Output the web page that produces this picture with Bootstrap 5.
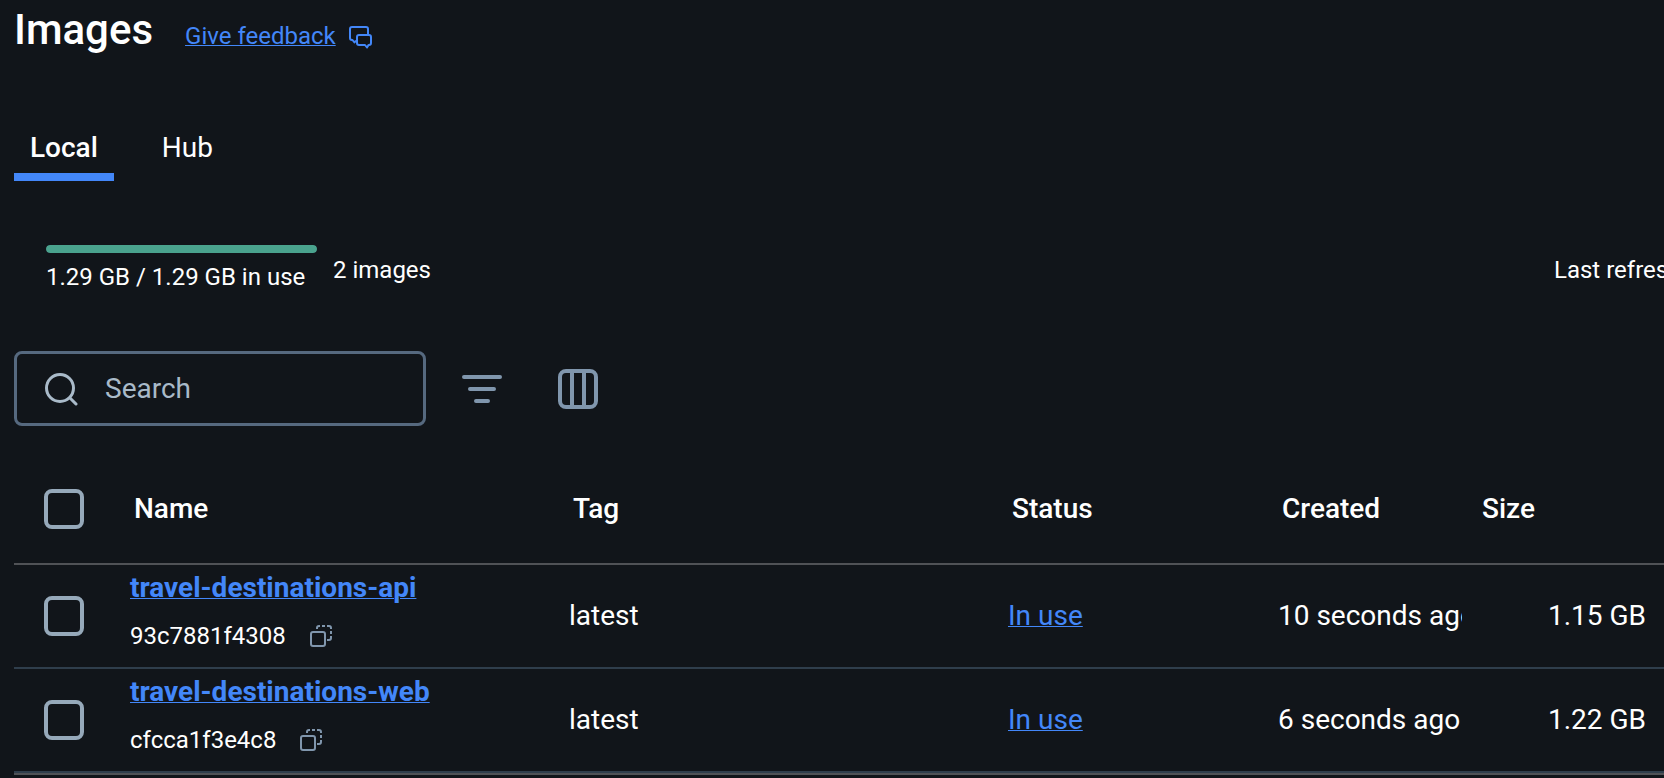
<!DOCTYPE html>
<html lang="en" data-bs-theme="dark">
<head>
<meta charset="utf-8">
<meta name="viewport" content="width=device-width, initial-scale=1">
<title>Images</title>
<link rel="stylesheet" href="https://cdn.jsdelivr.net/npm/bootstrap@5.3.0/dist/css/bootstrap.min.css">
<style>
  body {
    --bs-body-bg: #11151a;
    --bs-body-color: #fff;
    --accent: #4387f9;
    --icon: #8096ad;
    background: #11151a;
    color: #fff;
    font-family: Roboto, "Liberation Sans", sans-serif;
    font-size: 28px;
    line-height: 42px;
    overflow-x: hidden;
  }
  a { color: var(--accent); text-decoration-thickness: 1px; text-underline-offset: 1px; }
  a:hover { color: #7aabff; }
  svg { display: block; flex: none; fill: none; stroke: currentColor; }
  .page { padding-left: 14px; }
  .title { font-size: 42px; line-height: 60px; font-weight: 500; }
  .fs-note { font-size: 24px; line-height: 36px; }
  .feedback { margin-top: 18px; gap: 12px; }
  .feedback svg { margin-top: 2px; }
  .tabs { margin-top: 62px; gap: 32px; }
  .tabs .nav-link { color: #fff; padding: 6px 16px 5px; border-bottom: 8px solid transparent; border-radius: 0; line-height: 40px; }
  .tabs .nav-link.active { font-weight: 500; border-color: var(--accent); }
  .usage { margin-top: 64px; padding-left: 32px; gap: 16px; }
  .usage-meter { width: 271px; }
  .usage .progress { height: 8px; border-radius: 4px; background: #2c3a44; margin-bottom: 6px; }
  .usage .progress-bar { background: #4aa38e; border-radius: 4px; }
  .refreshed { width: 110px; }
  .tools { margin-top: 56px; gap: 36px; }
  .search { width: 412px; height: 75px; border: 3px solid #56697f; border-radius: 8px; padding: 0 24px 0 26px; gap: 26px; color: #a9bac9; }
  .search input, .search input:focus { background: none; border: 0; box-shadow: none; padding: 0; font-size: 28px; line-height: 42px; color: #fff; }
  .search input::placeholder { color: #a9bac9; opacity: 1; }
  .tool-btn { color: var(--icon); padding: 0; border: 0; }
  .tools-icons { gap: 56px; }
  .images-frame { margin-top: 46px; border-bottom: 2px solid #505256; }
  .images { --bs-table-bg: transparent; --bs-table-color: #fff; table-layout: fixed; margin: 0; }
  .images th, .images td { border: 0; border-bottom: 2px solid #2f3e4c; padding: 0 16px; height: 104px; white-space: nowrap; overflow: hidden; vertical-align: middle; }
  .images thead th { border-color: #505256; padding: 0 20px 18px; height: 92px; font-weight: 500; }
  .images tr > .pick { padding-left: 30px; padding-right: 0; }
  .images td.text-end { padding-right: 18px; }
  .images .form-check-input { display: block; width: 40px; height: 40px; margin: 0; border: 4px solid #96a9ba; border-radius: 8px; background-color: transparent; }
  .images .form-check-input:checked { background-color: var(--accent); border-color: var(--accent); }
  .name-cell { gap: 9px; padding-bottom: 11px; }
  .name-cell a { font-weight: 700; }
  .hash { gap: 24px; }
  .c-pick { width: 100px; } .c-status { width: 270px; } .c-created { width: 200px; } .c-size { width: 202px; }
</style>
</head>
<body>
<main class="page">
  <header class="d-flex align-items-start gap-4">
    <h1 class="title m-0 pe-2">Images</h1>
    <div class="feedback fs-note d-flex align-items-center"><a href="#">Give feedback</a>
      <svg width="24" height="24" viewBox="0 0 24 24" stroke-width="2" stroke-linejoin="round" color="#4387f9" aria-hidden="true"><path d="M8 15.500 6.500 17.500 4.500 15H4Q2 15 2 13V4Q2 2 4 2h14Q20 2 20 4v5.500"/><path d="M11 10h10Q23 10 23 12v6q0 2-2 2h-.5l-1.500 2.500-2-2.500h-6q-2 0-2-2v-6q0-2 2-2z"/></svg>
    </div>
  </header>

  <nav class="nav tabs" aria-label="Image source">
    <a class="nav-link active" aria-current="page" href="#">Local</a>
    <a class="nav-link" href="#">Hub</a>
  </nav>

  <section class="usage fs-note d-flex align-items-center">
    <div class="usage-meter">
      <div class="progress" role="progressbar" aria-label="Disk space in use" aria-valuenow="100" aria-valuemin="0" aria-valuemax="100"><div class="progress-bar" style="width: 100%"></div></div>
      <div class="text-nowrap">1.29 GB / 1.29 GB in use</div>
    </div>
    <div>2 images</div>
    <div class="refreshed ms-auto text-nowrap overflow-hidden">Last refresh</div>
  </section>

  <div class="tools d-flex align-items-center">
    <label class="search d-flex align-items-center">
      <svg width="36" height="36" viewBox="0 0 36 36" stroke-width="3" stroke-linecap="round" aria-hidden="true"><circle cx="17" cy="17" r="13.500"/><path d="m27 27 6 6"/></svg>
      <input class="form-control" type="text" placeholder="Search" aria-label="Search">
    </label>
    <div class="tools-icons d-flex">
      <button class="btn tool-btn" type="button" aria-label="Filter"><svg width="40" height="40" viewBox="0 0 40 40" stroke-width="4" stroke-linecap="round"><path d="M2 8h36M8 20h24M14 32h12"/></svg></button>
      <button class="btn tool-btn" type="button" aria-label="Columns"><svg width="40" height="40" viewBox="0 0 40 40" stroke-width="4"><rect x="2" y="2" width="36" height="36" rx="6"/><path d="M14 2v36M26 2v36"/></svg></button>
    </div>
  </div>

  <div class="images-frame">
  <table class="table images">
    <colgroup><col class="c-pick"><col><col><col class="c-status"><col class="c-created"><col class="c-size"></colgroup>
    <thead>
      <tr>
        <th class="pick"><input class="form-check-input" type="checkbox" aria-label="Select all images"></th>
        <th scope="col">Name</th><th scope="col">Tag</th><th scope="col">Status</th><th scope="col">Created</th><th scope="col">Size</th>
      </tr>
    </thead>
    <tbody>
      <tr>
        <td class="pick"><input class="form-check-input" type="checkbox" aria-label="Select travel-destinations-api"></td>
        <td><div class="name-cell d-flex flex-column align-items-start"><a href="#">travel-destinations-api</a>
          <div class="hash fs-note d-flex align-items-center">93c7881f4308
            <button class="btn tool-btn" type="button" aria-label="Copy ID"><svg width="22" height="22" viewBox="0 0 22 22" stroke-width="2"><rect x="1" y="7" width="14" height="14" rx="2"/><path d="M7 4V3q0-2 2-2h1M12 1h3M17 1h2q2 0 2 2v1M21 6v3M21 11v2q0 2-2 2h-2"/></svg></button></div></div></td>
        <td>latest</td><td><a href="#">In use</a></td><td>10 seconds ago</td><td class="text-end">1.15 GB</td>
      </tr>
      <tr>
        <td class="pick"><input class="form-check-input" type="checkbox" aria-label="Select travel-destinations-web"></td>
        <td><div class="name-cell d-flex flex-column align-items-start"><a href="#">travel-destinations-web</a>
          <div class="hash fs-note d-flex align-items-center">cfcca1f3e4c8
            <button class="btn tool-btn" type="button" aria-label="Copy ID"><svg width="22" height="22" viewBox="0 0 22 22" stroke-width="2"><rect x="1" y="7" width="14" height="14" rx="2"/><path d="M7 4V3q0-2 2-2h1M12 1h3M17 1h2q2 0 2 2v1M21 6v3M21 11v2q0 2-2 2h-2"/></svg></button></div></div></td>
        <td>latest</td><td><a href="#">In use</a></td><td>6 seconds ago</td><td class="text-end">1.22 GB</td>
      </tr>
    </tbody>
  </table>
  </div>
</main>
<script src="https://cdn.jsdelivr.net/npm/bootstrap@5.3.0/dist/js/bootstrap.bundle.min.js"></script>
</body>
</html>
